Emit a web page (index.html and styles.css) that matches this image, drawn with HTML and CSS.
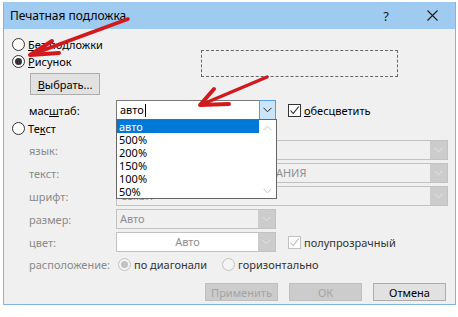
FILE: index.html
```html
<!DOCTYPE html>
<html lang="ru">
<head>
<meta charset="utf-8">
<title>Печатная подложка</title>
<link rel="stylesheet" href="styles.css">
</head>
<body>
<div class="window">
  <div class="titlebar">
    <span class="title">Печатная подложка</span>
    <span class="help">?</span>
    <span class="close"><svg width="11" height="11" viewBox="0 0 11 11"><path d="M0.5 0.5 L10.5 10.5 M10.5 0.5 L0.5 10.5" stroke="#1a1a1a" stroke-width="1.1" fill="none"/></svg></span>
  </div>
  <div class="content">
    <div class="radio-row"><span class="radio"></span><span><u>Б</u>ез подложки</span></div>
    <div class="pic-row">
      <div class="pic-left">
        <div class="radio-row"><span class="radio checked"></span><span><u>Р</u>исунок</span></div>
        <button class="btn choose"><u>В</u>ыбрать...</button>
      </div>
      <div class="preview"></div>
    </div>

    <div class="field-row scale-row">
      <span class="label">мас<u>ш</u>таб:</span>
      <div class="combo short active">
        <span class="value">авто<span class="caret"></span></span>
        <span class="arrow"><svg width="9" height="6" viewBox="0 0 9 6"><path d="M0.5 0.8 L4.5 4.8 L8.5 0.8" stroke="#222" stroke-width="1" fill="none"/></svg></span>
        <div class="list">
          <div class="items">
            <div class="item sel">авто</div>
            <div class="item">500%</div>
            <div class="item">200%</div>
            <div class="item">150%</div>
            <div class="item">100%</div>
            <div class="item">50%</div>
          </div>
          <div class="scroll">
            <svg width="9" height="6" viewBox="0 0 9 6"><path d="M0.5 5.2 L4.5 1.2 L8.5 5.2" stroke="#c4c4c4" stroke-width="1" fill="none"/></svg>
            <svg width="9" height="6" viewBox="0 0 9 6"><path d="M0.5 0.8 L4.5 4.8 L8.5 0.8" stroke="#c4c4c4" stroke-width="1" fill="none"/></svg>
          </div>
        </div>
      </div>
      <div class="check"><span class="box"><svg width="11" height="11" viewBox="0 0 11 11"><path d="M1.5 5.5 L4.2 8.5 L9.8 1.5" stroke="#222" stroke-width="1.1" fill="none"/></svg></span><span><u>о</u>бесцветить</span></div>
    </div>

    <div class="radio-row text-radio"><span class="radio"></span><span>Те<u>к</u>ст</span></div>

    <div class="field-row lang-row">
      <span class="label dis">язык:</span>
      <div class="combo full dis">
        <span class="value"></span>
        <span class="arrow"><svg width="9" height="6" viewBox="0 0 9 6"><path d="M0.5 0.8 L4.5 4.8 L8.5 0.8" stroke="#e4e4e4" stroke-width="1" fill="none"/></svg></span>
      </div>
    </div>
    <div class="field-row next-row">
      <span class="label dis">текст:</span>
      <div class="combo full dis">
        <span class="value">ДЛЯ СЛУЖЕБНОГО ПОЛЬЗОВАНИЯ</span>
        <span class="arrow"><svg width="9" height="6" viewBox="0 0 9 6"><path d="M0.5 0.8 L4.5 4.8 L8.5 0.8" stroke="#e4e4e4" stroke-width="1" fill="none"/></svg></span>
      </div>
    </div>
    <div class="field-row next-row">
      <span class="label dis">шрифт:</span>
      <div class="combo full dis">
        <span class="value">Calibri</span>
        <span class="arrow"><svg width="9" height="6" viewBox="0 0 9 6"><path d="M0.5 0.8 L4.5 4.8 L8.5 0.8" stroke="#e4e4e4" stroke-width="1" fill="none"/></svg></span>
      </div>
    </div>
    <div class="field-row next-row">
      <span class="label dis">размер:</span>
      <div class="combo short dis">
        <span class="value">Авто</span>
        <span class="arrow"><svg width="9" height="6" viewBox="0 0 9 6"><path d="M0.5 0.8 L4.5 4.8 L8.5 0.8" stroke="#e4e4e4" stroke-width="1" fill="none"/></svg></span>
      </div>
    </div>
    <div class="field-row next-row">
      <span class="label dis">цвет:</span>
      <div class="combo short dis white">
        <span class="value center">Авто</span>
        <span class="arrow"><svg width="9" height="6" viewBox="0 0 9 6"><path d="M0.5 0.8 L4.5 4.8 L8.5 0.8" stroke="#e4e4e4" stroke-width="1" fill="none"/></svg></span>
      </div>
      <div class="check dis"><span class="box"><svg width="11" height="11" viewBox="0 0 11 11"><path d="M1.5 5.5 L4.2 8.5 L9.8 1.5" stroke="#b8b8b8" stroke-width="1.1" fill="none"/></svg></span><span>полупрозрачный</span></div>
    </div>
    <div class="field-row place-row">
      <span class="label dis">расположение:</span>
      <div class="radio-row dis first"><span class="radio checked"></span><span>по диагонали</span></div>
      <div class="radio-row dis second"><span class="radio"></span><span>горизонтально</span></div>
    </div>

    <div class="buttons">
      <button class="btn dlg off">Применить</button>
      <button class="btn dlg off">ОК</button>
      <button class="btn dlg">Отмена</button>
    </div>
  </div>
</div>

<svg class="annot" width="458" height="317" viewBox="0 0 458 317">
  <g stroke="#d01a1e" fill="none" stroke-linecap="round" stroke-linejoin="round">
    <path d="M128 19 L33 54" stroke-width="3.5"/>
    <path d="M52 41 L30 55 L59 53" stroke-width="4"/>
    <path d="M267 77 L203 104" stroke-width="3.5"/>
    <path d="M214 89 L200 105 L229 104" stroke-width="4"/>
  </g>
</svg>
</body>
</html>
```

FILE: styles.css
```css
* { box-sizing: border-box; }
html, body { margin: 0; padding: 0; background: #ffffff; }
body {
  width: 458px;
  height: 317px;
  position: relative;
  overflow: hidden;
  font-family: "Noto Sans", "Open Sans", sans-serif;
  font-size: 11px;
  color: #000;
}
u { text-decoration: underline; text-underline-offset: 1px; }

.window {
  margin: 2px 0 0 3px;
  width: 453px;
  border: 1px solid #80b3e6;
  border-top: none;
  background: #f0f0f0;
}
.titlebar {
  height: 27px;
  background: #9fcbf0;
  display: flex;
  align-items: center;
  padding-left: 6px;
  font-size: 12px;
}
.title { flex: 1; }
.help { width: 10px; text-align: center; font-size: 13px; margin-right: 36px; color: #1a1a1a; }
.close { width: 11px; height: 11px; display: flex; margin-right: 17px; }

.content { padding: 7px 9px 3px 8px; }

.radio-row { display: flex; align-items: center; height: 17px; gap: 3px; }
.radio {
  width: 13px; height: 13px;
  border: 1px solid #333;
  border-radius: 50%;
  background: #fff;
  position: relative;
  flex: none;
}
.radio.checked::after {
  content: "";
  position: absolute;
  left: 2px; top: 2px;
  width: 7px; height: 7px;
  border-radius: 50%;
  background: #333;
}
.text-radio { margin-top: 0; }

.pic-row { display: flex; }
.pic-left { width: 189px; flex: none; }
.preview { width: 197px; height: 27px; margin-top: -3px; border: 1px dashed #666; }

.btn {
  font: inherit;
  background: #e1e1e1;
  border: 1px solid #adadad;
  padding: 0;
  color: #000;
}
.choose { display: block; margin: 3px 0 0 18px; width: 70px; height: 22px; }

.field-row { display: flex; align-items: center; margin-left: 17px; height: 20px; }
.scale-row { margin-top: 5px; }
.lang-row { margin-top: 3px; }
.next-row { margin-top: 3px; }
.place-row { margin-top: 4px; height: 17px; }

.label { width: 87px; flex: none; }
.label.dis { color: #8a8a8a; }

.combo {
  position: relative;
  height: 20px;
  flex: none;
  display: flex;
  border: 1px solid #c2c2c2;
  background: #f0f0f0;
}
.combo.short { width: 160px; }
.combo.full { width: 332px; }
.combo.white { background: #fff; }
.combo .value { flex: 1; padding-left: 3px; line-height: 18px; white-space: nowrap; overflow: hidden; }
.combo.dis .value { color: #8f8f8f; }
.combo .value.center { text-align: center; padding-left: 0; }
.combo .arrow { width: 17px; flex: none; background: #cccccc; display: flex; align-items: center; justify-content: center; }
.combo.active { border-color: #7a7a7a; background: #fff; }
.combo.active .arrow { background: #cce4f7; border: 1px solid #569de5; margin: -1px -1px -1px 0; width: 17px; }
.caret { display: inline-block; width: 1px; height: 13px; background: #000; vertical-align: -3px; margin-left: 1px; }

.list {
  position: absolute;
  left: -1px;
  top: 18px;
  width: 161px;
  background: #fff;
  border: 1px solid #666;
  display: flex;
  z-index: 2;
}
.items { flex: 1; }
.item { height: 13px; line-height: 13px; padding-left: 2px; }
.item.sel { background: #0078d7; color: #fff; }
.scroll { width: 17px; display: flex; flex-direction: column; justify-content: space-between; align-items: center; padding: 5px 0 4px; }

.check { display: flex; align-items: center; gap: 3px; margin-left: 12px; }
.box { width: 13px; height: 13px; border: 1px solid #333; background: #fff; display: flex; align-items: center; justify-content: center; }
.check.dis .box { border-color: #c2c2c2; }
.check.dis { color: #333; }

.radio-row.dis { color: #333; }
.radio-row.dis .radio { border-color: #c2c2c2; background: #f4f4f4; }
.radio-row.dis .radio.checked::after { background: #c2c2c2; }
.radio-row.first { margin-left: 2px; }
.radio-row.second { margin-left: 15px; }

.buttons { display: flex; justify-content: flex-end; gap: 11px; margin-top: 10px; }
.dlg { width: 73px; height: 18px; }
.dlg.off { background: #cccccc; border-color: #bfbfbf; color: #a4a4a4; }

.annot { position: absolute; left: 0; top: 0; pointer-events: none; }
```
